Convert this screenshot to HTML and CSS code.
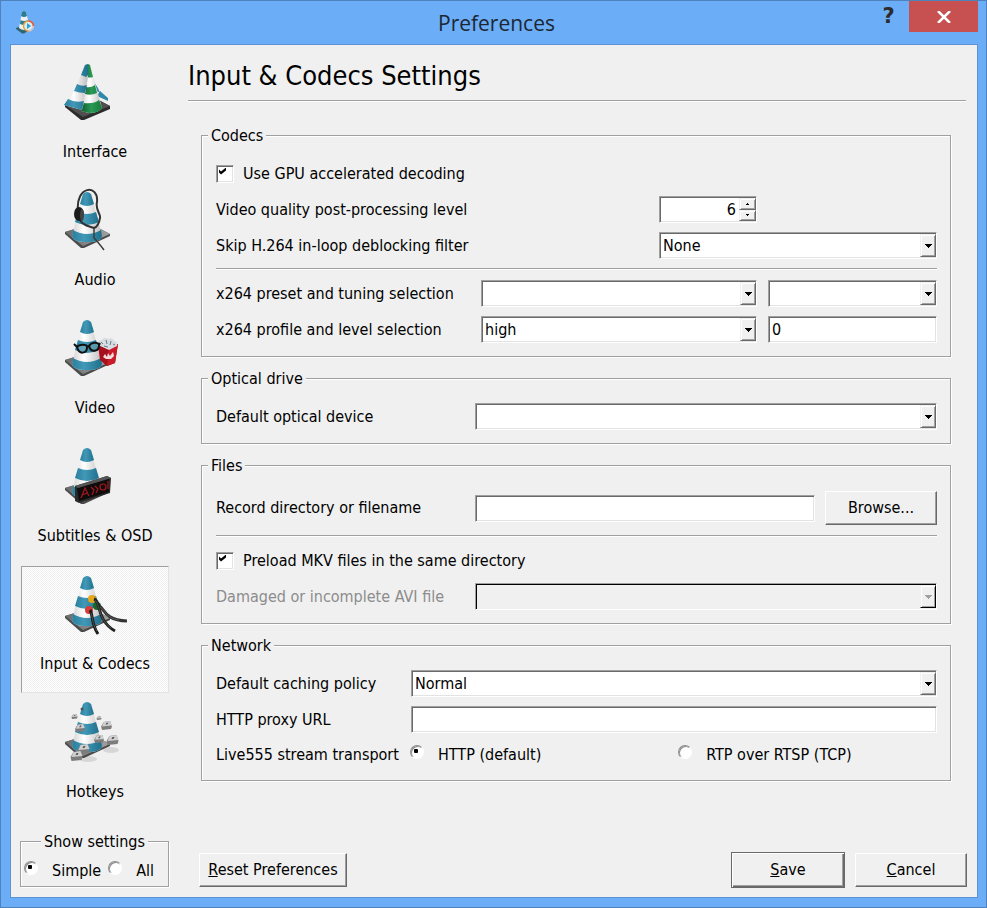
FILE: index.html
```html
<!DOCTYPE html>
<html lang="en">
<head>
<meta charset="utf-8">
<title>Preferences</title>
<link rel="stylesheet" href="styles.css">
</head>
<body>
<svg class="defs" aria-hidden="true">
  <defs>
    <linearGradient id="blue" x1="0" x2="1"><stop offset="0" stop-color="#2a7f9d"/><stop offset=".4" stop-color="#4199b7"/><stop offset="1" stop-color="#1f6f8c"/></linearGradient>
    <linearGradient id="white" x1="0" x2="1"><stop offset="0" stop-color="#d2d2d2"/><stop offset=".4" stop-color="#ffffff"/><stop offset="1" stop-color="#bdbdbd"/></linearGradient>
    <linearGradient id="green" x1="0" x2="1"><stop offset="0" stop-color="#0f5c2c"/><stop offset=".5" stop-color="#2a9a55"/><stop offset="1" stop-color="#157a3c"/></linearGradient>
    <linearGradient id="plate" x1="0" x2="1"><stop offset="0" stop-color="#6a6a6a"/><stop offset="1" stop-color="#a2a2a2"/></linearGradient>
    <symbol id="cone" viewBox="0 0 64 64">
      <path d="M2 44 L28 36 L47 46 V48 L21 60 H18 L2 46Z" fill="#4a4a4a"/>
      <path d="M2 44 L28 36 L47 46 L20 58Z" fill="url(#plate)"/>
      <path d="M20 6 Q24 2 28 6 L39 48 Q38 54 24 54 Q10 54 9 48Z" fill="url(#white)"/>
      <path d="M20 6 Q24 2 28 6 L31 16 Q24 20 17 16Z" fill="url(#blue)"/>
      <path d="M15 24 Q24 28 33 24 L36 34 Q24 40 12 34Z" fill="url(#blue)"/>
      <path d="M10 42 Q24 50 38 42 L39 48 Q38 54 24 54 Q10 54 9 48Z" fill="url(#blue)"/>
    </symbol>
    <symbol id="key" viewBox="0 0 12 10">
      <path d="M0 6 L3 1 L10 0 L12 6 L11 9 L1 10Z" fill="#7c7c7c"/>
      <path d="M3 1 L10 0 L12 5 L1 6Z" fill="#cfcfcf"/>
      <path d="M6 2 L8 2 L7 4 L5 4Z" fill="#555"/>
    </symbol>
    <symbol id="down" viewBox="0 0 7 4"><path d="M0 0h7v1h-1v1h-1v1h-1v1h-1v-1h-1v-1h-1v-1h-1z"/></symbol>
  </defs>
</svg>

<div class="window">
  <header class="titlebar">
    <svg class="app-icon" viewBox="0 0 20 24" aria-hidden="true">
      <path d="M1 18 L9 15 L16 19 L9 23.500 L7 23.500 L1 19Z" fill="#2f6773"/>
      <path d="M7 2 Q9 0 11 2 L15 18 Q9 22 4 18Z" fill="#eef2f4"/>
      <path d="M7 2 Q9 0 11 2 L12 6 Q9 8 6 6Z" fill="#2d7d92"/>
      <path d="M5.500 10 Q9 12 13 10 L14 14 Q9 16 5 14Z" fill="#2d7d92"/>
      <circle cx="13.500" cy="16" r="5" fill="#d9eef5" stroke="#e8a13c" stroke-width="1.500"/>
      <path d="M13.500 11 A5 5 0 0 1 18.500 16" fill="none" stroke="#e2574a" stroke-width="1.500"/>
      <path d="M18.500 16 A5 5 0 0 1 13.500 21" fill="none" stroke="#c9c4e0" stroke-width="1.500"/>
      <path d="M12 13 L16 16 L12 19Z" fill="#2b9fd0"/>
    </svg>
    <div class="title">Preferences</div>
    <div class="window-buttons">
      <button class="help" type="button" aria-label="Help">?</button>
      <button class="close" type="button" aria-label="Close">
        <svg viewBox="0 0 14 12" aria-hidden="true"><path d="M1 0 L13 12 M13 0 L1 12" stroke="#fff" stroke-width="2.500"/></svg>
      </button>
    </div>
  </header>

  <form class="client">
    <aside class="sidebar">
      <nav class="categories">
        <button class="category" type="button">
          <svg viewBox="0 0 64 64" aria-hidden="true">
            <path d="M2 45 L28 36 L47 46 V49 L21 60 H18 L2 47Z" fill="#2b2b2b"/>
            <path d="M2 45 L28 36 L47 46 L20 57Z" fill="#4f4f4f"/>
            <path d="M32 22 L36 30 L45 38 V41 L37 37 L31 38Z" fill="#f4f4f4"/>
            <path d="M31 22 L35 28 L37 33 L32 30Z M37 31 L45 38 V41 L34 36Z" fill="#3387a8"/>
            <path d="M22 5 Q24 3 27 5 L39 48 Q36 53 26 53 L18 51Z" fill="url(#white)"/>
            <path d="M24 4 Q26 4 27 5 L30 17 Q27 18 24 17Z M23 27 Q28 28 32 25 L34 33 Q28 36 22 34Z M21 43 Q31 44 36 40 L39 48 Q36 53 26 53 L18 51Z" fill="url(#green)"/>
            <path d="M22 5 L25 4 L25 17 L19 50 L1 45 Q8 37 12 29Z" fill="url(#white)"/>
            <path d="M22 5 L25 4 L25 15 L23 17 L18 15Z M14 24 Q19 27 24 25 L22 33 Q16 33 11 31Z M5 39 Q12 43 21 41 L19 50 L1 45Z" fill="url(#blue)"/>
          </svg>
          <span>Interface</span>
        </button>
        <button class="category" type="button">
          <svg viewBox="0 0 64 64" aria-hidden="true">
            <use href="#cone"/>
            <path d="M15 24 C12 -3 36 -4 34 14 C32 22 38 26 37 30 C36 36 34 39 31 40 C26 38 20 38 17 32" fill="none" stroke="#333" stroke-width="2"/>
            <path d="M31 40 V50 Q35 54 41 62" fill="none" stroke="#3c3c3c" stroke-width="1.500"/>
            <ellipse cx="16" cy="26" rx="5" ry="7" fill="#1c1c1c"/><ellipse cx="19" cy="27" rx="2" ry="6" fill="#444"/>
          </svg>
          <span>Audio</span>
        </button>
        <button class="category" type="button">
          <svg viewBox="0 0 64 64" aria-hidden="true">
            <use href="#cone"/>
            <path d="M35 29 L55 28 L52 47 L44 50 L37 44Z" fill="#a70f1c"/><path d="M46 32 L55 28 L52 47 L44 50Z" fill="#c91b2a"/>
            <path d="M40 41 L42 38 L44 41 L45 37 L47 40 L50 36 L51 40 L48 43 H43Z" fill="#f3dcdc"/>
            <path d="M35 29 Q34 24 39 24 Q41 20 45 23 Q50 21 51 25 Q55 25 54 30 L46 34Z" fill="#d7dde0"/>
            <path d="M38 26 l2 2 M43 24 l1 4 M48 25 l-1 4 M50 28 l2 1 M41 30 l4 1" stroke="#5f7c8f"/>
            <path d="M14 31 C16 28 24 28 24 31 C24 38 16 39 14 31Z M26 30 C28 26 35 26 36 29 C36 36 28 37 26 30Z M24 31 L26 30 M14 31 L11 28 M36 29 L37 27" fill="#86b5c2" fill-opacity=".5" stroke="#111" stroke-width="2"/>
          </svg>
          <span>Video</span>
        </button>
        <button class="category" type="button">
          <svg viewBox="0 0 64 64" aria-hidden="true">
            <use href="#cone"/>
            <path d="M12 42 L44 32 L48 34 L47 49 L16 59 L12 57Z" fill="#2a2a2a"/><path d="M14 44 L46 35 L46 48 L16 57Z" fill="#100c0c"/><path d="M12 42 L44 32 L48 34 L15 44Z" fill="#555"/>
            <path d="M18 54 L22 44 L26 52 M19 51 L24 49 M28 43 L31 46 L29 51 M32 42 L35 45 L33 49 M45 37 V45" fill="none" stroke="#a5181f" stroke-width="1.200"/>
            <circle cx="40" cy="43" r="3" fill="none" stroke="#a5181f" stroke-width="1.200"/>
          </svg>
          <span>Subtitles &amp; OSD</span>
        </button>
        <button class="category selected" type="button" aria-current="page">
          <svg viewBox="0 0 64 64" aria-hidden="true">
            <use href="#cone"/>
            <circle cx="34" cy="34" r="4" fill="#176b2a"/><circle cx="29" cy="27" r="4" fill="#e3a71c"/><circle cx="26" cy="38" r="4" fill="#d93a3a"/>
            <path d="M36 34 C42 36 40 48 64 49" fill="none" stroke="#333" stroke-width="3"/>
            <path d="M31 27 C38 29 33 48 52 59" fill="none" stroke="#222" stroke-width="3"/>
            <path d="M27 38 C30 42 28 52 35 62" fill="none" stroke="#1c1c1c" stroke-width="3"/>
            <path d="M37 35 C43 38 42 46 56 48 M32 28 C37 32 35 47 48 56 M28 41 C30 46 29 52 34 59" fill="none" stroke="#666" stroke-width=".7"/>
          </svg>
          <span>Input &amp; Codecs</span>
        </button>
        <button class="category" type="button">
          <svg viewBox="0 2 64 64" aria-hidden="true">
            <ellipse cx="48" cy="52" rx="8" ry="3" fill="#d6d6d6"/><ellipse cx="25" cy="61" rx="9" ry="3" fill="#d6d6d6"/>
            <use href="#cone"/>
            <use href="#key" x="12" y="26" width="10" height="8"/><use href="#key" x="8" y="16" width="7" height="5"/><use href="#key" x="33" y="18" width="6" height="4"/>
            <use href="#key" x="38" y="23" width="11" height="9"/><use href="#key" x="31" y="37" width="10" height="8"/><use href="#key" x="43" y="37" width="13" height="10"/>
            <use href="#key" x="14" y="46" width="13" height="10"/><use href="#key" x="7" y="53" width="13" height="10"/><circle cx="19" cy="11" r="1.500" fill="#555"/>
          </svg>
          <span>Hotkeys</span>
        </button>
      </nav>
      <fieldset class="show-settings">
        <legend>Show settings</legend>
        <label class="option"><input type="radio" name="show" checked>Simple</label>
        <label class="option"><input type="radio" name="show">All</label>
      </fieldset>
    </aside>

    <main class="main">
      <h1>Input &amp; Codecs Settings</h1>
      <div class="groups">
        <fieldset class="group">
          <legend>Codecs</legend>
          <label class="option"><input type="checkbox" checked>Use GPU accelerated decoding</label>
          <div class="row cols-wide">
            <label for="quality">Video quality post-processing level</label>
            <div class="spin">
              <input class="field" id="quality" type="number" value="6" min="0" max="6">
              <div class="steps">
                <button type="button" aria-label="Increase"><svg viewBox="0 0 3 2" aria-hidden="true"><path d="M1 0h1v1h1v1H0V1h1z"/></svg></button>
                <button type="button" aria-label="Decrease"><svg viewBox="0 0 3 2" aria-hidden="true"><path d="M0 0h3v1H2v1H1V1H0z"/></svg></button>
              </div>
            </div>
          </div>
          <div class="row cols-wide">
            <label for="deblock">Skip H.264 in-loop deblocking filter</label>
            <div class="combo"><select class="field" id="deblock"><option>None</option></select><span class="drop"><svg aria-hidden="true"><use href="#down"/></svg></span></div>
          </div>
          <hr>
          <div class="row cols-pair">
            <label for="preset">x264 preset and tuning selection</label>
            <div class="combo"><select class="field" id="preset"><option></option></select><span class="drop"><svg aria-hidden="true"><use href="#down"/></svg></span></div>
            <div class="combo"><select class="field" aria-label="Tuning"><option></option></select><span class="drop"><svg aria-hidden="true"><use href="#down"/></svg></span></div>
          </div>
          <div class="row cols-pair">
            <label for="profile">x264 profile and level selection</label>
            <div class="combo"><select class="field" id="profile"><option>high</option></select><span class="drop"><svg aria-hidden="true"><use href="#down"/></svg></span></div>
            <input class="field" type="text" value="0" aria-label="Level">
          </div>
        </fieldset>

        <fieldset class="group">
          <legend>Optical drive</legend>
          <div class="row cols-device">
            <label for="device">Default optical device</label>
            <div class="combo"><select class="field" id="device"><option></option></select><span class="drop"><svg aria-hidden="true"><use href="#down"/></svg></span></div>
          </div>
        </fieldset>

        <fieldset class="group">
          <legend>Files</legend>
          <div class="row cols-device">
            <label for="record">Record directory or filename</label>
            <div class="browse-row"><input class="field" id="record" type="text"><button class="push" type="button">Browse...</button></div>
          </div>
          <hr>
          <label class="option"><input type="checkbox" checked>Preload MKV files in the same directory</label>
          <div class="row cols-device">
            <label class="disabled" for="avi">Damaged or incomplete AVI file</label>
            <div class="combo disabled"><select class="field" id="avi" disabled><option></option></select><span class="drop"><svg aria-hidden="true"><use href="#down"/></svg></span></div>
          </div>
        </fieldset>

        <fieldset class="group">
          <legend>Network</legend>
          <div class="row cols-network">
            <label for="caching">Default caching policy</label>
            <div class="combo"><select class="field" id="caching"><option>Normal</option></select><span class="drop"><svg aria-hidden="true"><use href="#down"/></svg></span></div>
          </div>
          <div class="row cols-network">
            <label for="proxy">HTTP proxy URL</label>
            <input class="field" id="proxy" type="text">
          </div>
          <div class="row cols-network">
            <span>Live555 stream transport</span>
            <div class="transport">
              <label class="option"><input type="radio" name="transport" checked>HTTP (default)</label>
              <label class="option"><input type="radio" name="transport">RTP over RTSP (TCP)</label>
            </div>
          </div>
        </fieldset>
      </div>

      <footer class="actions">
        <button class="push reset" type="button"><u>R</u>eset Preferences</button>
        <button class="push default" type="button"><u>S</u>ave</button>
        <button class="push" type="button"><u>C</u>ancel</button>
      </footer>
    </main>
  </form>
</div>
</body>
</html>
```

FILE: styles.css
```css
* { box-sizing: border-box; }

body {
  margin: 0;
  background: #6badf6;
  color: #000;
  font: 16px/20px "DejaVu Sans Condensed", "DejaVu Sans", sans-serif;
}

button, input, select { font: inherit; color: inherit; margin: 0; }
button { padding: 0; }
svg { display: block; }
.defs { position: absolute; width: 0; height: 0; }

.window {
  display: flex;
  flex-direction: column;
  min-height: 100vh;
  border: 1px solid #4f81bd;
}

/* Title bar */
.titlebar {
  display: grid;
  grid-template-columns: 1fr auto 1fr;
  height: 43px;
  padding: 0 8px 0 14px;
}
.app-icon { width: 20px; height: 24px; margin-top: 9px; }
.title { font: 21px/44px "Open Sans", "Noto Sans", sans-serif; color: #1c2733; }
.window-buttons { display: flex; justify-content: flex-end; align-items: flex-start; }
.help {
  width: 41px;
  height: 31px;
  border: 0;
  background: none;
  color: #2b2b2b;
  font: bold 21px/31px "DejaVu Sans", sans-serif;
}
.close {
  display: grid;
  place-items: center;
  width: 69px;
  height: 31px;
  border: 0;
  background: #c75050;
}
.close svg { width: 14px; height: 12px; }

/* Client area */
.client {
  display: grid;
  grid-template-columns: 149px 1fr;
  gap: 19px;
  flex: 1;
  margin: 0 8px 9px 9px;
  padding: 9px 10px 9px 9px;
  border: 1px solid #5b93d6;
  background: #f0f0f0;
}
.sidebar, .main { display: flex; flex-direction: column; min-width: 0; }

.categories { display: flex; flex-direction: column; gap: 1px; padding-left: 1px; }
.category {
  display: flex;
  flex-direction: column;
  align-items: center;
  gap: 18px;
  height: 127px;
  padding-top: 5px;
  border: 1px solid transparent;
  background: none;
}
.category svg { width: 64px; height: 64px; }
.category.selected {
  border-color: #a0a0a0 #e3e3e3 #e3e3e3 #a0a0a0;
  background: repeating-conic-gradient(#f0f0f0 0 25%, #fff 0 50%) 0 0 / 2px 2px;
}

/* Etched frames */
fieldset {
  min-width: 0;
  margin: 0;
  border: 1px solid #a0a0a0;
  box-shadow: 1px 1px 0 #fff, inset 1px 1px 0 #fff;
}
legend { padding: 2px 3px 0; background: #f0f0f0; }
.show-settings {
  display: flex;
  gap: 8px;
  margin-top: auto;
  margin-bottom: 1px;
  padding: 9px 4px 5px;
}
.show-settings legend { margin: 0 auto; }

h1 {
  margin: 0 1px 23px 0;
  padding: 6px 0 8px;
  border-bottom: 1px solid #a0a0a0;
  box-shadow: 0 1px 0 #fff;
  font-size: 27px;
  font-weight: normal;
  line-height: 32px;
}
.groups { display: flex; flex-direction: column; gap: 10px; padding: 0 16px 0 13px; }
.group { padding: 14px 13px 13px 14px; }
.group legend { margin-left: -8px; }
.group > * + * { margin-top: 9px; }
.group > legend + * { margin-top: 0; }
.group > hr + * { margin-top: 10px; }
hr {
  height: 2px;
  margin-bottom: 0;
  border: 0;
  border-top: 1px solid #a0a0a0;
  background: #fff;
}

.row { display: grid; align-items: center; column-gap: 11px; }
.cols-wide { grid-template-columns: 432fr 278fr; }
.cols-pair { grid-template-columns: 254fr 276fr 169fr; }
.cols-device { grid-template-columns: 248fr 462fr; }
.cols-network { grid-template-columns: 184px 1fr; }
.row > span, .row > label { white-space: nowrap; }
label.disabled { color: #8c8c8c; }

/* Sunken fields */
.field {
  display: block;
  width: 100%;
  min-width: 0;
  height: 27px;
  padding: 0 3px;
  border: 1px solid;
  border-color: #a0a0a0 #fff #fff #a0a0a0;
  border-radius: 0;
  background: #fff;
  box-shadow: inset 1px 1px 0 #696969, inset -1px -1px 0 #e3e3e3;
  appearance: none;
}
.combo, .spin { position: relative; }
.drop, .steps button {
  display: grid;
  place-items: center;
  border: 1px solid;
  border-color: #f0f0f0 #696969 #696969 #f0f0f0;
  background: #f0f0f0;
  box-shadow: inset 1px 1px 0 #fff, inset -1px -1px 0 #a0a0a0;
}
.drop {
  position: absolute;
  top: 2px;
  right: 1px;
  bottom: 2px;
  width: 16px;
  pointer-events: none;
}
.drop svg { width: 7px; height: 4px; }
.combo.disabled .field {
  opacity: 1;
  background: #f0f0f0;
  box-shadow: inset 1px 1px 0 #000;
}
.combo.disabled .drop { border-color: #f0f0f0 #000 #000 #f0f0f0; }
.combo.disabled svg { fill: #a0a0a0; }

.spin { width: 98px; }
.spin .field { padding-right: 20px; text-align: right; appearance: textfield; }
.spin .field::-webkit-inner-spin-button { appearance: none; }
.steps {
  position: absolute;
  top: 2px;
  right: 1px;
  bottom: 2px;
  display: grid;
  grid-template-rows: 1fr 1fr;
  width: 17px;
}
.steps svg { width: 3px; height: 2px; }

/* Tick boxes and radio buttons */
.option { display: flex; align-items: center; gap: 9px; white-space: nowrap; }
.group > .option { min-height: 27px; }
.transport { display: grid; grid-template-columns: 257fr 247fr; min-height: 25px; }
.option input {
  position: relative;
  flex: none;
  width: 18px;
  height: 18px;
  appearance: none;
}
input[type="checkbox"] {
  border: 1px solid;
  border-color: #a0a0a0 #fff #fff #a0a0a0;
  background: #fff;
  box-shadow: inset 1px 1px 0 #696969, inset -1px -1px 0 #e3e3e3;
}
input[type="checkbox"]:checked::before {
  content: "";
  position: absolute;
  top: 2px;
  left: 2px;
  width: 7px;
  height: 7px;
  background: #000;
  clip-path: polygon(0 2px, 2px 4px, 7px 0, 7px 3px, 2px 7px, 0 5px);
}
input[type="radio"]::before {
  content: "";
  position: absolute;
  top: -1px;
  left: -1px;
  width: 12px;
  height: 12px;
  border: 1px solid;
  border-color: #8c8c8c #fff #fff #8c8c8c;
  border-radius: 50%;
  background: #fff;
  box-shadow: inset 1px 1px 0 #8c8c8c;
}
input[type="radio"]:checked::after {
  content: "";
  position: absolute;
  top: 3px;
  left: 3px;
  width: 4px;
  height: 4px;
  border-radius: 1px;
  background: #000;
}

/* Push buttons */
.push {
  min-width: 112px;
  height: 34px;
  border: 1px solid;
  border-color: #fff #696969 #696969 #fff;
  background: #f0f0f0;
  box-shadow: inset -1px -1px 0 #a0a0a0;
}
.push.default {
  border-color: #696969;
  min-width: 114px;
  height: 36px;
  box-shadow: inset 1px 1px 0 #fff, inset -1px -1px 0 #696969, inset -2px -2px 0 #a0a0a0;
}
.browse-row { display: flex; align-items: center; gap: 10px; min-height: 36px; }
.browse-row .push { flex: none; }

.actions {
  display: flex;
  align-items: center;
  gap: 10px;
  margin-top: auto;
  padding-left: 11px;
}
.reset { width: 148px; margin-right: auto; }
```
